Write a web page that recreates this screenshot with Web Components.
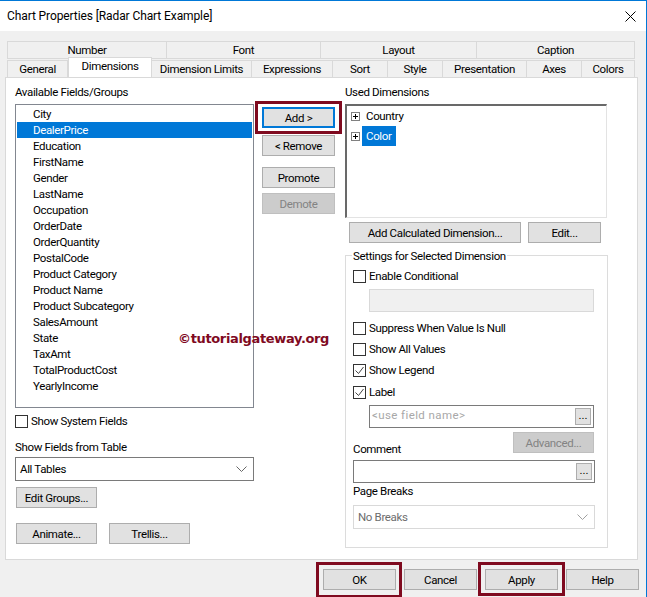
<!DOCTYPE html>
<html>
<head>
<meta charset="utf-8">
<title>Chart Properties</title>
<style>
  html, body { margin: 0; padding: 0; background: #f0f0f0; }
  body { font: 11.5px/16px Roboto, "Liberation Sans", sans-serif; letter-spacing: -.35px; color: #000; }
</style>
</head>
<body>
<chart-dialog></chart-dialog>

<script>
const define = (name, css, html) => {
  customElements.define(name, class extends HTMLElement {
    constructor() {
      super();
      const root = this.attachShadow({ mode: "open" });
      root.innerHTML = `<style>${css}</style>${html(this)}`;
    }
  });
};

define("win-button", `
  :host { display: inline-flex; box-sizing: border-box; width: 73px; height: 21px; align-items: center; justify-content: center;
    position: relative; background: #e1e1e1; border: 1px solid #adadad; color: #000; white-space: nowrap; }
  :host([disabled]) { background: #cccccc; border-color: #bfbfbf; color: #838383; }
  :host([focused]) { border: 2px solid #0078d7; }
  :host([wide]) { width: 172px; }
  :host([mid]) { width: 81px; }
  :host([tiny]) { width: 16px; height: 17px; padding-bottom: 4px; letter-spacing: 0; }
  :host([marked])::after { content: ""; position: absolute; inset: -8px -7px -9px -8px; border: 3px solid #7f0a1f; pointer-events: none; }
  :host([marked="short"])::after { inset: -8px -8px -7px -8px; }
  :host([marked][focused])::after { inset: -8px -9px -8px -9px; }
`, () => `<slot></slot>`);

define("win-check", `
  :host { display: flex; align-items: center; gap: 3px; height: 16px; white-space: nowrap; }
  svg { flex: none; width: 13px; height: 13px; }
`, el => `<svg viewBox="0 0 13 13"><rect x=".5" y=".5" width="12" height="12" fill="#fff" stroke="#333"/>${
  el.hasAttribute("checked") ? `<path d="M2.5 6.5l3 3 5-6.5" fill="none" stroke="#444" stroke-width="1"/>` : ""
}</svg><slot></slot>`);

define("win-list", `
  :host { display: block; box-sizing: border-box; background: #fff; border: 1px solid #828790; padding: 1px; overflow: hidden; }
  ::slotted(div) { height: 16px; line-height: 16px; padding-left: 16px; white-space: nowrap; }
  ::slotted(.sel) { background: #0078d7; color: #fff; }
`, () => `<slot></slot>`);

define("win-combo", `
  :host { display: flex; box-sizing: border-box; align-items: center; justify-content: space-between; height: 24px; padding: 0 6px 0 4px;
    background: #fff; border: 1px solid #7a7a7a; }
  :host([disabled]) { border-color: #d9d9d9; color: #6d6d6d; }
  svg { width: 11px; height: 6px; }
  path { fill: none; stroke: #666; }
  :host([disabled]) path { stroke: #a0a0a0; }
`, () => `<slot></slot><svg viewBox="0 0 11 6"><path d="M.5.5l5 5 5-5"/></svg>`);

define("win-field", `
  :host { display: flex; box-sizing: border-box; align-items: center; justify-content: space-between; height: 23px; padding: 0 2px;
    background: #fff; border: 1px solid #7a7a7a; color: #a8a8a8; }
  :host([disabled]) { background: #f0f0f0; border-color: #d9d9d9; }
  span { padding-bottom: 3px; letter-spacing: .4px; }
`, el => `<span><slot></slot></span>${el.hasAttribute("disabled") ? "" : `<win-button tiny>...</win-button>`}`);

define("win-tree", `
  :host { display: block; box-sizing: border-box; background: #fff; padding: 0 4px;
    border: 1px solid #f0f0f0; border-top: 2px solid #696969; border-left: 2px solid #696969; border-right-color: #e3e3e3; border-bottom-color: #e3e3e3; }
`, () => `<slot></slot>`);

define("tree-row", `
  :host { display: flex; align-items: center; height: 20px; gap: 2px; }
  svg { width: 9px; height: 9px; flex: none; }
  span { padding: 0 4px; height: 20px; line-height: 20px; }
  :host([sel]) span { background: #0078d7; color: #fff; }
`, () => `<svg viewBox="0 0 9 9"><rect x=".5" y=".5" width="8" height="8" fill="#fff" stroke="#808080"/><path d="M2 4.5h5M4.5 2v5" stroke="#000"/></svg><span><slot></slot></span>`);

define("win-group", `
  :host { display: block; box-sizing: border-box; position: relative; border: 1px solid #dcdcdc; }
  .cap { position: absolute; top: -8px; left: 6px; padding: 0 1px; background: #fff; white-space: nowrap; }
`, el => `<span class="cap">${el.getAttribute("caption")}</span><slot></slot>`);

define("win-tabs", `
  :host { display: block; height: 37px; margin: 0 2px; position: relative; }
  .row { display: flex; height: 18px; box-sizing: border-box; }
  .row > div { box-sizing: border-box; display: flex; align-items: center; justify-content: center; background: #f0f0f0;
    border: 1px solid #d9d9d9; border-left-width: 0; white-space: nowrap; }
  .row > div:first-child { border-left-width: 1px; }
  .top { margin-bottom: 1px; }
  .row > .on { background: #fff; border: 1px solid #d9d9d9; border-bottom: 0; height: 21px; margin-top: -3px; padding-bottom: 5px; }
`, () => `
  <div class="row top">
    <div style="width:160px">Number</div><div style="width:154px">Font</div>
    <div style="width:156px">Layout</div><div style="width:158px">Caption</div>
  </div>
  <div class="row">
    <div style="width:61px">General</div><div class="on" style="width:84px">Dimensions</div>
    <div style="width:100px">Dimension Limits</div><div style="width:81px">Expressions</div>
    <div style="width:55px">Sort</div><div style="width:55px">Style</div>
    <div style="width:84px">Presentation</div><div style="width:55px">Axes</div><div style="width:53px">Colors</div>
  </div>`);

define("chart-dialog", `
  :host { display: flex; flex-direction: column; box-sizing: border-box; width: 647px; height: 597px; overflow: hidden;
    border-top: 1px solid #0078d7; border-right: 1px solid #0078d7; background: #f0f0f0; position: relative; }
  header { flex: none; height: 30px; background: #fff; display: flex; align-items: center; justify-content: space-between; padding: 0 10px 0 7px; font-size: 12px; letter-spacing: -.1px; }
  header svg { width: 11px; height: 11px; }
  main { flex: none; padding: 10px 8px 0 5px; display: flex; flex-direction: column; }
  .panel { box-sizing: border-box; height: 483px; background: #fff; border: 1px solid #d9d9d9; position: relative; margin-top: -1px;
    display: grid; grid-template-columns: 239px 91px 263px; padding: 6px 0 0 9px; }
  .col { display: flex; flex-direction: column; align-items: flex-start; }
  win-list { width: 239px; height: 304px; margin-top: 4px; }
  .mid { padding: 23px 0 0 8px; }
  .right win-tree { width: 262px; height: 114px; margin-top: 4px; }
  .mark { position: absolute; left: 172px; top: 253px; color: #7f0a1f; font: bold 13px "DejaVu Sans", sans-serif; letter-spacing: -.35px; white-space: nowrap; }
  footer { display: flex; justify-content: flex-end; gap: 8px; padding: 9px 0 0 0; margin-right: -1px; }
  .row { display: flex; }
  .pad { padding-left: 7px; }
`, () => `
  <header>
    <span>Chart Properties [Radar Chart Example]</span>
    <svg viewBox="0 0 11 11"><path d="M.5.5l10 10M10.5.5l-10 10" stroke="#000" fill="none"/></svg>
  </header>
  <main>
    <win-tabs></win-tabs>
    <div class="panel">
      <div class="col">
        <span>Available Fields/Groups</span>
        <win-list>
          <div>City</div><div class="sel">DealerPrice</div><div>Education</div><div>FirstName</div>
          <div>Gender</div><div>LastName</div><div>Occupation</div><div>OrderDate</div>
          <div>OrderQuantity</div><div>PostalCode</div><div>Product Category</div><div>Product Name</div>
          <div>Product Subcategory</div><div>SalesAmount</div><div>State</div><div>TaxAmt</div>
          <div>TotalProductCost</div><div>YearlyIncome</div>
        </win-list>
        <win-check style="margin-top:5px">Show System Fields</win-check>
        <span style="margin-top:10px">Show Fields from Table</span>
        <win-combo style="width:239px;margin-top:2px">All Tables</win-combo>
        <win-button mid style="margin:6px 0 0 1px">Edit Groups...</win-button>
        <div class="row" style="gap:12px;margin:15px 0 0 1px">
          <win-button mid>Animate...</win-button><win-button mid>Trellis...</win-button>
        </div>
      </div>
      <div class="col mid">
        <win-button focused marked>Add &gt;</win-button>
        <win-button style="margin-top:7px">&lt; Remove</win-button>
        <win-button style="margin-top:11px">Promote</win-button>
        <win-button disabled style="margin-top:5px">Demote</win-button>
      </div>
      <div class="col right">
        <span>Used Dimensions</span>
        <win-tree>
          <tree-row>Country</tree-row>
          <tree-row sel>Color</tree-row>
        </win-tree>
        <div class="row" style="gap:7px;margin:4px 0 0 4px">
          <win-button wide>Add Calculated Dimension...</win-button><win-button>Edit...</win-button>
        </div>
        <win-group caption="Settings for Selected Dimension" style="width:263px;height:293px;margin-top:12px">
          <div class="col pad" style="padding-top:12px">
            <win-check>Enable Conditional</win-check>
            <win-field disabled style="width:225px;margin:5px 0 0 16px"></win-field>
            <win-check style="margin-top:8px">Suppress When Value Is Null</win-check>
            <win-check style="margin-top:5px">Show All Values</win-check>
            <win-check checked style="margin-top:5px">Show Legend</win-check>
            <win-check checked style="margin-top:6px">Label</win-check>
            <win-field style="width:225px;margin:5px 0 0 16px">&lt;use field name&gt;</win-field>
            <div class="row" style="width:241px;height:21px;margin-top:4px;justify-content:space-between">
              <span style="align-self:flex-end;margin-bottom:-4px">Comment</span>
              <win-button mid disabled>Advanced...</win-button>
            </div>
            <win-field style="width:242px;margin-top:7px"></win-field>
            <span style="margin-top:0">Page Breaks</span>
            <win-combo disabled style="width:242px;margin-top:6px">No Breaks</win-combo>
          </div>
        </win-group>
      </div>
      <div class="mark">©tutorialgateway.org</div>
    </div>
    <footer>
      <win-button marked>OK</win-button><win-button>Cancel</win-button>
      <win-button marked="short">Apply</win-button><win-button>Help</win-button>
    </footer>
  </main>
`);
</script>
</body>
</html>
